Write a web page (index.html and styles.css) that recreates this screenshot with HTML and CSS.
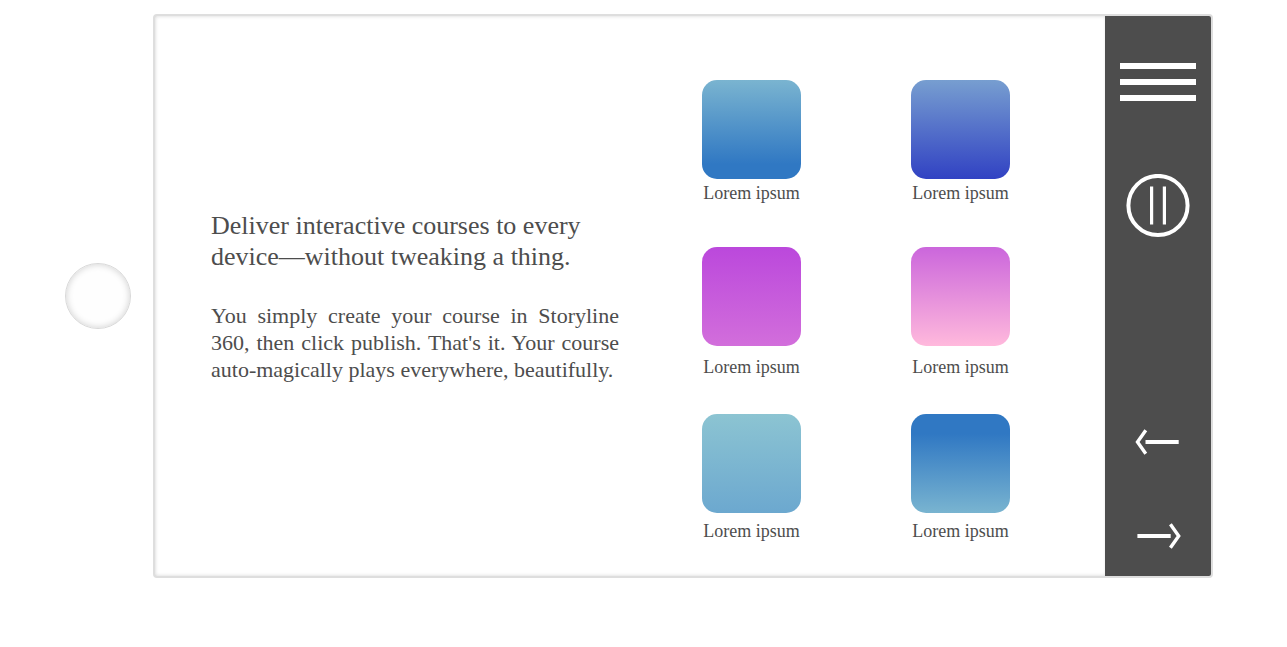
FILE: index.html
```html
<!DOCTYPE html>
<html lang="en">
<head>
<meta charset="utf-8">
<meta name="viewport" content="width=device-width, initial-scale=1">
<title>Interactive courses</title>
<link rel="stylesheet" href="styles.css">
</head>
<body>
<div class="device">
  <button class="home" type="button" aria-label="Home"></button>
  <div class="screen">
    <main class="content">
      <section class="copy">
        <h1 class="title">Deliver interactive courses to every device—without tweaking a thing.</h1>
        <p class="text">You simply create your course in Storyline 360, then click publish. That's it. Your course auto-magically plays everywhere, beautifully.</p>
      </section>
      <section class="tiles">
        <figure class="tile"><div class="swatch sky"></div><figcaption class="label">Lorem ipsum</figcaption></figure>
        <figure class="tile"><div class="swatch indigo"></div><figcaption class="label">Lorem ipsum</figcaption></figure>
        <figure class="tile roomy"><div class="swatch violet"></div><figcaption class="label">Lorem ipsum</figcaption></figure>
        <figure class="tile roomy"><div class="swatch pink"></div><figcaption class="label">Lorem ipsum</figcaption></figure>
        <figure class="tile medium"><div class="swatch aqua"></div><figcaption class="label">Lorem ipsum</figcaption></figure>
        <figure class="tile medium"><div class="swatch ocean"></div><figcaption class="label">Lorem ipsum</figcaption></figure>
      </section>
    </main>
    <nav class="sidebar" aria-label="Player controls">
      <div class="group top">
        <button class="control" type="button" aria-label="Menu">
          <svg width="76" height="38" viewBox="0 0 76 38"><path d="M0 3H76M0 19H76M0 35H76" stroke-width="6"/></svg>
        </button>
        <button class="control" type="button" aria-label="Pause">
          <svg width="64" height="64" viewBox="0 0 64 64"><circle cx="32" cy="31.5" r="29.6" stroke-width="4"/><path d="M25.6 12.5V50.5M38.4 12.5V50.5" stroke-width="3.2"/></svg>
        </button>
      </div>
      <div class="group bottom">
        <button class="control" type="button" aria-label="Previous">
          <svg width="48" height="26" viewBox="0 0 48 26"><path d="M11.5 13H44.7" stroke-width="4"/><path d="M11.8 1.2L3.5 13L11.8 24.8" stroke-width="3.4"/></svg>
        </button>
        <button class="control" type="button" aria-label="Next">
          <svg width="48" height="26" viewBox="0 0 48 26"><path d="M3.4 13H36.7" stroke-width="4"/><path d="M36.4 1.2L44.7 13L36.4 24.8" stroke-width="3.4"/></svg>
        </button>
      </div>
    </nav>
  </div>
</div>
</body>
</html>
```

FILE: styles.css
```css
* {
  box-sizing: border-box;
}

body {
  margin: 0;
  background: #fff;
  color: #4d4d4d;
  font-family: "Liberation Serif", "Times New Roman", serif;
}

.device {
  display: flex;
  align-items: center;
  gap: 22px;
  padding: 14px 74px 32px 65px;
}

.home {
  flex: none;
  width: 66px;
  height: 66px;
  padding: 0;
  border: 1px solid #d9d9d9;
  border-radius: 50%;
  background: #fefefe;
  box-shadow: inset 0 0 7px #d0d0d0;
}

.screen {
  flex: 1;
  display: flex;
  border: 2px solid #dedede;
  border-radius: 4px;
  background: #fff;
}

.content {
  flex: 1;
  display: flex;
  align-items: center;
  justify-content: space-between;
  padding: 0 95px 0 56px;
  box-shadow: inset 2px 0 4px -2px #ddd, inset 0 2px 4px -2px #ddd, inset 0 -2px 4px -2px #ddd;
}

.copy {
  flex: 0 1 408px;
}

.title {
  margin: 0 0 30px;
  font-size: 26px;
  font-weight: 400;
  line-height: 31px;
}

.text {
  margin: 0;
  font-size: 22px;
  line-height: 27px;
  text-align: justify;
}

.tiles {
  flex: none;
  display: grid;
  grid-template-columns: auto auto;
  grid-template-rows: 167px 167px auto;
  column-gap: 110px;
  padding: 64px 0 35px;
}

.tile {
  margin: 0;
  display: flex;
  flex-direction: column;
  align-items: center;
  gap: 4px;
}

.roomy {
  gap: 11px;
}

.medium {
  gap: 8px;
}

.swatch {
  width: 99px;
  height: 99px;
  border-radius: 15px;
}

.sky {
  background: linear-gradient(#7ab4d0, #3078c3 85%);
}

.indigo {
  background: linear-gradient(#779ed0, #3142c3);
}

.violet {
  background: linear-gradient(#bb48dc, #d26edb);
}

.pink {
  background: linear-gradient(#cb66dc, #ffb9dc);
}

.aqua {
  background: linear-gradient(#8cc4d2, #6ca8cf);
}

.ocean {
  background: linear-gradient(#3078c3 20%, #79b4d0);
}

.label {
  font-size: 18px;
  line-height: 20px;
}

.sidebar {
  flex: none;
  width: 106px;
  display: flex;
  flex-direction: column;
  justify-content: space-between;
  padding: 47px 0 27px;
  border-radius: 0 2px 2px 0;
  background: #4d4d4d;
}

.group {
  display: flex;
  flex-direction: column;
  align-items: center;
}

.top {
  gap: 73px;
}

.bottom {
  gap: 68px;
}

.control {
  display: block;
  padding: 0;
  border: 0;
  background: none;
}

.control svg {
  display: block;
  fill: none;
  stroke: #fff;
}
```
